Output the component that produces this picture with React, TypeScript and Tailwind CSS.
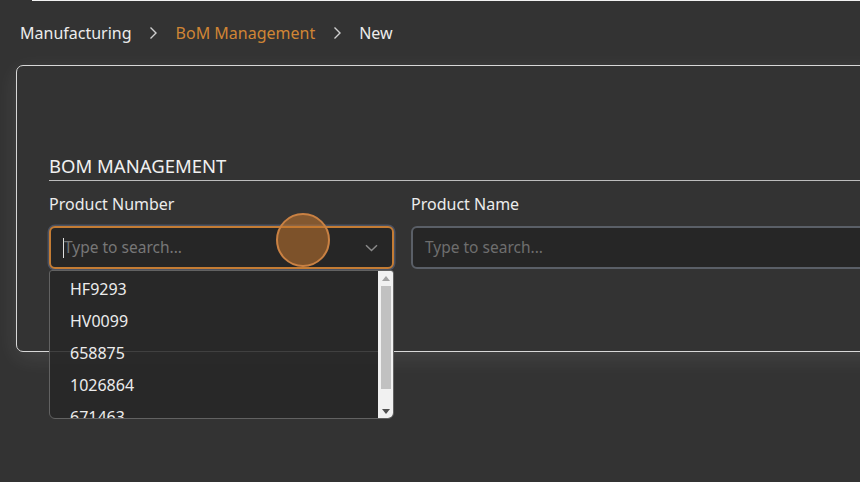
import React from "react";

const Chevron = () => (
  <svg width="9" height="14" viewBox="0 0 9 14" className="mx-[17.5px]">
    <path d="M1.5 1.5 L7 7 L1.5 12.5" fill="none" stroke="#d0d0d0" strokeWidth="1.4" />
  </svg>
);

export default function App() {
  const items = ["HF9293", "HV0099", "658875", "1026864", "671463"];
  return (
    <div
      className="w-[860px] h-[482px] overflow-hidden bg-[#333333] relative text-[#e6e6e6]"
      style={{ fontFamily: '"Noto Sans", "Open Sans", sans-serif' }}
    >
      <div className="h-px ml-[32px] bg-[#f2f2f2]" />
      <div className="flex items-center h-[44px] mt-[10px] pl-[20px] text-[16px]">
        <span className="text-[#ececec]">Manufacturing</span>
        <Chevron />
        <span className="text-[#d08535]">BoM Management</span>
        <Chevron />
        <span className="text-[#ececec]">New</span>
      </div>
      <div className="ml-[16px] mt-[10px] w-[900px] h-[287px] border border-[#d8d8d8] rounded-[7px] bg-[#333333] shadow-[0_6px_22px_rgba(255,255,255,0.09)] pt-[87px] pl-[32px]">
        <div className="text-[18.5px] leading-[25px] text-[#f0f0f0] border-b border-[#bdbdbd] pb-[2px]">
          BOM MANAGEMENT
        </div>
        <div className="flex gap-[17px] mt-[13px]">
          <div className="w-[345px] flex flex-col">
            <div className="text-[16px] leading-[21px] text-[#ececec]">Product Number</div>
            <div className="mt-[11px] h-[43px] rounded-[6px] bg-[#262626] border-2 border-[#c47c34] shadow-[0_0_0_1.5px_#4b5262] flex items-center pl-[12px] pr-[14px]">
              <span className="w-px h-[20px] bg-[#e0e0e0]" />
              <span className="text-[15.5px] text-[#777777] flex-1">Type to search...</span>
              <svg width="13" height="8" viewBox="0 0 13 8">
                <path d="M1 1.2 L6.5 6.5 L12 1.2" fill="none" stroke="#8a8a8a" strokeWidth="1.5" />
              </svg>
            </div>
          </div>
          <div className="flex-1 flex flex-col">
            <div className="text-[16px] leading-[21px] text-[#ececec]">Product Name</div>
            <div className="mt-[11px] h-[43px] rounded-[6px] bg-[#262626] border-2 border-[#5a5f67] flex items-center pl-[12px]">
              <span className="text-[15.5px] text-[#6e6e6e]">Type to search...</span>
            </div>
          </div>
        </div>
      </div>

      {/* click indicator */}
      <div className="absolute left-[276px] top-[213px] w-[54px] h-[54px] rounded-full bg-[rgba(196,118,46,0.55)] border-2 border-[#c98143]" />

      {/* dropdown */}
      <div className="absolute left-[49px] top-[270px] w-[345px] h-[149px] border border-[#626262] rounded-b-[6px] rounded-t-[3px] bg-[rgba(38,38,38,0.86)] overflow-hidden">
        <div className="pt-[2px] pl-[20px]">
          {items.map((it) => (
            <div key={it} className="h-[32px] flex items-center text-[16px] text-[#ececec]">
              {it}
            </div>
          ))}
        </div>
        <div className="absolute right-0 top-0 bottom-0 w-[15px] bg-[#f1f1f1] flex flex-col items-center">
          <div className="h-[14px] flex items-center justify-center">
            <svg width="8" height="5" viewBox="0 0 8 5">
              <path d="M0 5 L4 0 L8 5 Z" fill="#a3a3a3" />
            </svg>
          </div>
          <div className="w-[10px] h-[103px] bg-[#c1c1c1] mt-[1px]" />
          <div className="flex-1" />
          <div className="h-[14px] flex items-center justify-center">
            <svg width="8" height="5" viewBox="0 0 8 5">
              <path d="M0 0 L8 0 L4 5 Z" fill="#505050" />
            </svg>
          </div>
        </div>
      </div>
    </div>
  );
}
